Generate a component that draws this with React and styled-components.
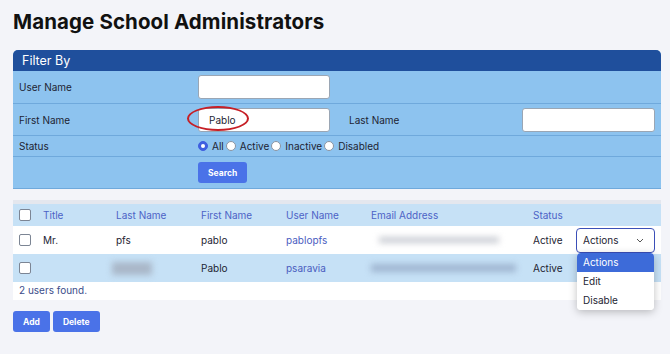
import React from "react";
import styled, { createGlobalStyle } from "styled-components";

const GlobalStyle = createGlobalStyle`
  body {
    margin: 0;
    background: #f3f4f9;
    font-family: "Inter", "Open Sans", sans-serif;
    color: #1d2433;
  }
`;

const Page = styled.div`
  padding: 9px 9px 0 13px;
  width: 670px;
  height: 354px;
  box-sizing: border-box;
  position: relative;
`;

const Title = styled.h1`
  margin: 0 0 15px 0;
  font-size: 20.5px;
  line-height: 26px;
  font-weight: 700;
  letter-spacing: 0.1px;
  color: #111;
`;

const Panel = styled.section`
  border-radius: 5px 5px 0 0;
  overflow: hidden;
  background: #8dc3ef;
  border-bottom: 1px solid #6fa9dc;
`;

const PanelHeader = styled.div`
  background: #1f4f9c;
  color: #fff;
  font-size: 12.5px;
  height: 21px;
  line-height: 22px;
  padding-left: 9px;
`;

const FilterRow = styled.div`
  display: grid;
  grid-template-columns: 185px 145px 179px 1fr;
  align-items: center;
  box-sizing: border-box;
  height: ${({ $h }) => $h}px;
  border-top: ${({ $first }) => ($first ? "none" : "1px solid #6fa9dc")};
  font-size: 10px;
  position: relative;
`;

const Label = styled.span`
  padding-left: ${({ $pl }) => $pl || 6}px;
  color: #1d2433;
`;

const Input = styled.div`
  width: ${({ $w }) => $w}px;
  height: 24px;
  background: #fff;
  border: 1px solid #9aa6b4;
  border-radius: 3px;
  box-sizing: border-box;
  font-size: 10px;
  line-height: 22px;
  padding-left: 10px;
  color: #1d2433;
`;

const Circle = styled.span`
  position: absolute;
  left: 174px;
  top: 2px;
  width: 62px;
  height: 25px;
  border: 2px solid #c61f26;
  border-radius: 50%;
  box-sizing: border-box;
`;

const RadioGroup = styled.div`
  display: flex;
  align-items: center;
  gap: 2px;
  grid-column: 2 / 5;
`;

const Radio = styled.span`
  width: 10px;
  height: 10px;
  border-radius: 50%;
  box-sizing: border-box;
  background: ${({ $on }) => ($on ? "#3f5fe0" : "#fff")};
  border: 1px solid ${({ $on }) => ($on ? "#3f5fe0" : "#8a94a2")};
  display: inline-flex;
  align-items: center;
  justify-content: center;
  margin-right: 2px;
  &::after {
    content: "";
    width: 4px;
    height: 4px;
    border-radius: 50%;
    background: ${({ $on }) => ($on ? "#fff" : "transparent")};
  }
`;

const Button = styled.button`
  background: #4a72e8;
  color: #fff;
  border: none;
  border-radius: 3px;
  font-family: inherit;
  font-weight: 700;
  font-size: 8.5px;
  height: 21px;
  padding: 0 ${({ $px }) => $px || 10}px;
  cursor: pointer;
`;

const TableBox = styled.div`
  margin-top: 11px;
  background: #fff;
  border-top: 4px solid #e4e7ee;
  position: relative;
`;

const Row = styled.div`
  display: grid;
  grid-template-columns: 30px 73px 85px 85px 85px 162px 43px 1fr;
  align-items: center;
  height: ${({ $h }) => $h}px;
  background: ${({ $bg }) => $bg};
  font-size: 10px;
  color: ${({ $head }) => ($head ? "#4d63c6" : "#1d2433")};
`;

const Check = styled.span`
  width: 12px;
  height: 12px;
  margin-left: 6px;
  border: 1px solid #7c8594;
  border-radius: 2px;
  background: #fff;
  box-sizing: border-box;
`;

const UserLink = styled.span`
  color: #4a5dbf;
`;

const Blur = styled.span`
  display: block;
  width: ${({ $w }) => $w}px;
  height: ${({ $h }) => $h}px;
  margin-left: ${({ $ml }) => $ml || 0}px;
  background: ${({ $bg }) => $bg};
  filter: blur(3px);
`;

const Select = styled.div`
  width: 79px;
  height: 25px;
  box-sizing: border-box;
  border: 1.5px solid #3b4fb8;
  border-radius: 4px;
  background: #fff;
  display: flex;
  align-items: center;
  justify-content: space-between;
  padding: 0 10px 0 6px;
  font-size: 10px;
  color: #1d2433;
`;

const Menu = styled.div`
  position: absolute;
  left: 564px;
  top: 49px;
  width: 77px;
  background: #fff;
  border-radius: 4px;
  box-shadow: 0 2px 8px rgba(0, 0, 0, 0.25);
  overflow: hidden;
  z-index: 2;
`;

const MenuItem = styled.div`
  height: 19px;
  line-height: 19px;
  padding-left: 6px;
  font-size: 10px;
  background: ${({ $active }) => ($active ? "#3d6bd9" : "#fff")};
  color: ${({ $active }) => ($active ? "#fff" : "#1d2433")};
`;

const Found = styled.div`
  font-size: 10px;
  line-height: 12px;
  color: #3c4d8a;
  padding: 2px 0 4px 6px;
`;

const Actions = styled.div`
  display: flex;
  gap: 3px;
  margin-top: 11px;
`;

const Chevron = () => (
  <svg width="8" height="5" viewBox="0 0 8 5">
    <path d="M1 1l3 3 3-3" fill="none" stroke="#555" strokeWidth="1" />
  </svg>
);

export default function App() {
  return (
    <Page>
      <GlobalStyle />
      <Title>Manage School Administrators</Title>
      <Panel>
        <PanelHeader>Filter By</PanelHeader>
        <FilterRow $h={32} $first>
          <Label>User Name</Label>
          <Input $w={132} />
        </FilterRow>
        <FilterRow $h={32}>
          <Label>First Name</Label>
          <Input $w={132}>Pablo</Input>
          <Label $pl={0}>Last Name</Label>
          <Input $w={133} />
          <Circle />
        </FilterRow>
        <FilterRow $h={21}>
          <Label>Status</Label>
          <RadioGroup>
            <Radio $on />All <Radio /> Active <Radio /> Inactive <Radio /> Disabled
          </RadioGroup>
        </FilterRow>
        <FilterRow $h={32}>
          <span />
          <div>
            <Button $px={10}>Search</Button>
          </div>
        </FilterRow>
      </Panel>

      <TableBox>
        <Row $h={22} $bg="#c6e1f6" $head>
          <Check />
          <span>Title</span>
          <span>Last Name</span>
          <span>First Name</span>
          <span>User Name</span>
          <span>Email Address</span>
          <span>Status</span>
          <span />
        </Row>
        <Row $h={28} $bg="#fff">
          <Check />
          <span>Mr.</span>
          <span>pfs</span>
          <span>pablo</span>
          <UserLink>pablopfs</UserLink>
          <Blur $w={120} $h={6} $ml={8} $bg="#c9ccd3" />
          <span>Active</span>
          <Select>
            Actions <Chevron />
          </Select>
        </Row>
        <Row $h={28} $bg="#c6e1f6">
          <Check />
          <span />
          <Blur $w={40} $h={13} $ml={-4} $bg="#a9b7c8" />
          <span>Pablo</span>
          <UserLink>psaravia</UserLink>
          <Blur $w={145} $h={8} $bg="#9fb5d0" />
          <span>Active</span>
          <span />
        </Row>
        <Found>2 users found.</Found>
        <Menu>
          <MenuItem $active>Actions</MenuItem>
          <MenuItem>Edit</MenuItem>
          <MenuItem>Disable</MenuItem>
        </Menu>
      </TableBox>
      <Actions>
        <Button $px={10}>Add</Button>
        <Button $px={10}>Delete</Button>
      </Actions>
    </Page>
  );
}
